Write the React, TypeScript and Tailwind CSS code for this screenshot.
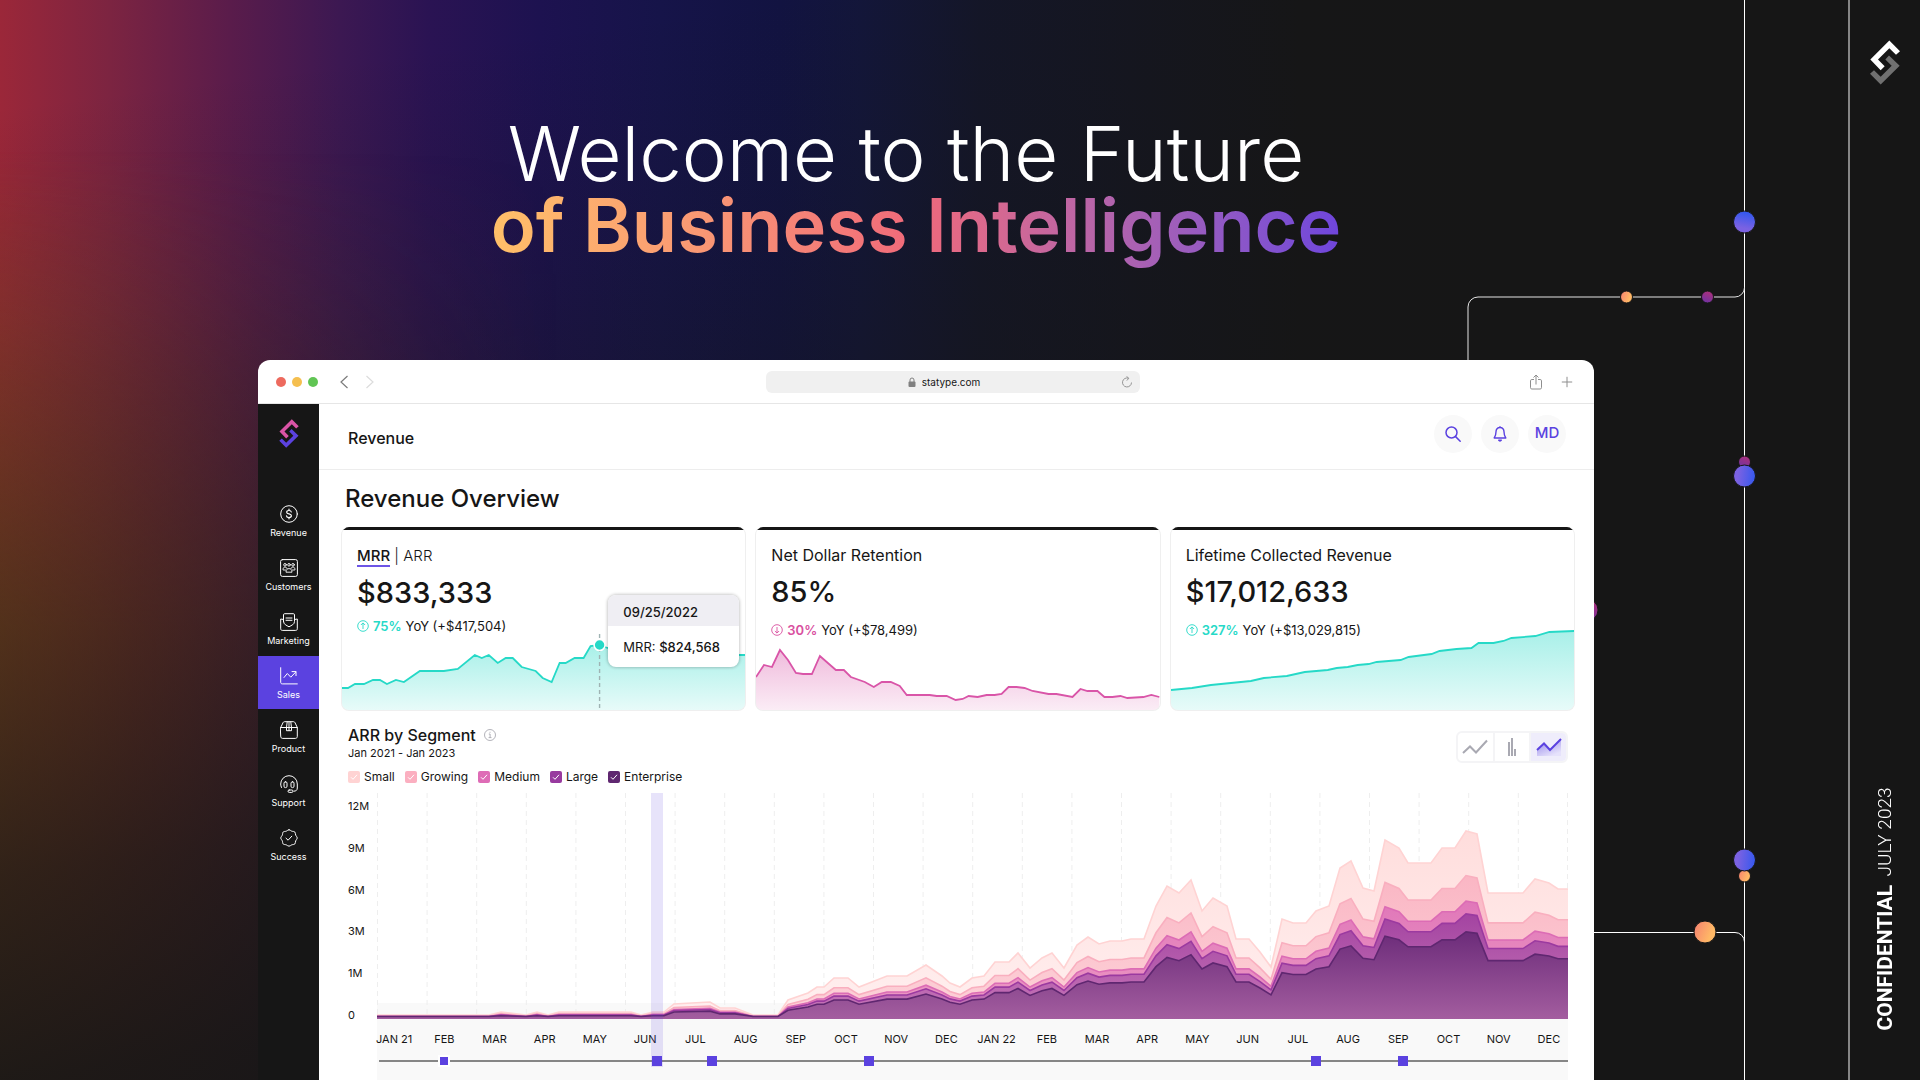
import { useId, useState } from "react";
import type { ReactNode } from "react";

type Point = [number, number];

const REVENUE_LINE: Point[] = [
  [0, 68], [6, 68], [13, 64], [22, 64], [31, 60], [38, 60], [45, 64], [54, 60], [62, 62], [78, 51], [102, 51],
  [116, 49], [133, 35], [140, 38], [147, 35], [156, 43], [164, 38], [171, 38], [180, 47], [194, 51], [201, 58],
  [210, 62], [218, 43], [224, 43], [233, 38], [242, 38], [249, 26], [258, 25], [266, 28], [300, 34], [397, 35], [404, 35],
];

const RETENTION_LINE: Point[] = [
  [0, 57], [8, 45], [16, 47], [24, 30], [32, 40], [40, 53], [47, 54], [56, 54], [64, 36], [80, 50], [88, 50],
  [95, 57], [109, 62], [118, 67], [126, 62], [135, 62], [144, 66], [151, 75], [174, 75], [181, 76], [191, 76],
  [200, 80], [207, 79], [213, 76], [222, 77], [231, 75], [239, 75], [246, 74], [253, 67], [261, 67], [269, 68],
  [277, 71], [293, 74], [301, 74], [317, 77], [325, 69], [332, 71], [342, 71], [349, 77], [357, 77], [365, 76],
  [372, 78], [388, 77], [396, 75], [404, 77],
];

const LIFETIME_LINE: Point[] = [
  [0, 70], [21, 68], [40, 65], [80, 61], [93, 58], [116, 56], [134, 52], [157, 50], [166, 48], [177, 47],
  [187, 45], [198, 44], [206, 42], [230, 40], [238, 37], [261, 34], [269, 31], [286, 29], [301, 28], [308, 23],
  [323, 23], [333, 21], [341, 18], [365, 16], [379, 12], [404, 11],
];

const TOTALS: Point[] = [
  [0, 4], [112, 4], [124, 7], [149, 4], [160, 7], [171, 4], [182, 7], [254, 7], [264, 4], [276, 7], [287, 7],
  [297, 15], [333, 17], [343, 11], [358, 11], [376, 4], [401, 4], [411, 19], [431, 26], [440, 32], [447, 32],
  [457, 41], [471, 41], [482, 32], [510, 43], [530, 43], [549, 54], [565, 43], [573, 36], [583, 32], [595, 41],
  [607, 43], [618, 57], [632, 57], [641, 66], [653, 51], [665, 61], [675, 66], [687, 51], [700, 74], [711, 82],
  [722, 75], [733, 78], [745, 78], [754, 80], [767, 80], [779, 113], [790, 133], [802, 126], [814, 139],
  [825, 108], [836, 121], [850, 113], [859, 80], [872, 80], [883, 67], [894, 52], [905, 100], [916, 96],
  [929, 96], [939, 108], [952, 113], [963, 151], [974, 158], [986, 131], [997, 128], [1008, 179], [1022, 171],
  [1031, 156], [1054, 156], [1065, 171], [1078, 171], [1089, 188], [1100, 185], [1111, 126], [1146, 126],
  [1158, 140], [1172, 136], [1181, 130], [1191, 130],
];

const SEGMENTS = [
  { name: "Small", share: 1, line: "#ffd3d3", top: "#ffdddc", bottom: "#fff0f0", box: "bg-[#ffd3d3]" },
  { name: "Growing", share: 0.763, line: "#f9afbf", top: "#fab6c4", bottom: "#fdd3d9", box: "bg-[#fbafc0]" },
  { name: "Medium", share: 0.627, line: "#dc6cb5", top: "#e077b9", bottom: "#ee9cc4", box: "bg-[#de6cb6]" },
  { name: "Large", share: 0.559, line: "#9b3aa0", top: "#a343a1", bottom: "#c878b8", box: "bg-[#983a9f]" },
  { name: "Enterprise", share: 0.463, line: "#5f2770", top: "#6c2c7a", bottom: "#a35d9f", box: "bg-[#5f2770]" },
];

const MONTHS = [
  "JAN 21", "FEB", "MAR", "APR", "MAY", "JUN", "JUL", "AUG", "SEP", "OCT", "NOV", "DEC",
  "JAN 22", "FEB", "MAR", "APR", "MAY", "JUN", "JUL", "AUG", "SEP", "OCT", "NOV", "DEC",
];

const MARKERS = [5.5, 23.4, 28, 41.2, 78.8, 86.1];

const toPath = (points: Point[]) => points.map(([x, y], i) => `${i ? "L" : "M"}${x} ${y}`).join("");

function Logo({ className, top, bottom }: { className: string; top: string; bottom: string }) {
  return (
    <svg viewBox="0 0 90 134" className={className} role="img" aria-label="Statype">
      <path d="M58 1 90 33 78 44 58 24 24 58 44 78 32 90 1 58Z" fill={top} />
      <path d="M32 133 0 101 12 90 32 110 65 77 46 58 57 46 89 77Z" fill={bottom} />
    </svg>
  );
}

function Circuit() {
  return (
    <svg
      viewBox="0 0 1920 1080"
      preserveAspectRatio="xMaxYMin slice"
      className="pointer-events-none absolute inset-0 h-full w-full"
      fill="none"
      aria-hidden="true"
    >
      <defs>
        <linearGradient id="blueV" x1="0" y1="1" x2="0.2" y2="0">
          <stop offset="0.3" stopColor="#7b62e2" />
          <stop offset="1" stopColor="#3558ee" />
        </linearGradient>
        <linearGradient id="blueH" x1="0" y1="0.4" x2="1" y2="0.5">
          <stop offset="0.2" stopColor="#7b62e2" />
          <stop offset="1" stopColor="#3558ee" />
        </linearGradient>
        <linearGradient id="orangeDot" x1="0" y1="0.2" x2="1" y2="0.6">
          <stop offset="0" stopColor="#f6836f" />
          <stop offset="0.8" stopColor="#ffb866" />
        </linearGradient>
        <linearGradient id="plumDot" x1="0.2" y1="1" x2="0.6" y2="0">
          <stop offset="0" stopColor="#6d33a5" />
          <stop offset="0.9" stopColor="#a4307f" />
        </linearGradient>
      </defs>
      <path d="M1744.5 0V1080" stroke="#fff" />
      <path d="M1468 360V307a10 10 0 0 1 10-10H1735a9.500 9.500 0 0 0 9.500-9.500" stroke="#e4e4e4" />
      <path d="M1590 932.500H1735a9.500 9.500 0 0 1 9.500 9.500" stroke="#fff" />
      <g stroke="#161616">
        <circle cx="1744.500" cy="222" r="11" fill="url(#blueV)" />
        <circle cx="1626.500" cy="297" r="6" fill="url(#orangeDot)" />
        <circle cx="1707.500" cy="297" r="6" fill="url(#plumDot)" />
        <circle cx="1744.500" cy="462" r="6" fill="url(#plumDot)" />
        <circle cx="1744.500" cy="476" r="11" fill="url(#blueH)" />
        <circle cx="1587" cy="610" r="11" fill="url(#plumDot)" />
        <circle cx="1744.500" cy="876" r="6" fill="url(#orangeDot)" />
        <circle cx="1744.500" cy="860" r="11" fill="url(#blueH)" />
        <circle cx="1705" cy="932" r="11" fill="url(#orangeDot)" />
      </g>
    </svg>
  );
}

function NavIcon({ children }: { children: ReactNode }) {
  return (
    <svg
      viewBox="0 0 18 18"
      className="h-[18px] w-[18px]"
      fill="none"
      stroke="currentColor"
      strokeLinecap="round"
      strokeLinejoin="round"
      aria-hidden="true"
    >
      {children}
    </svg>
  );
}

const NAV: { label: string; icon: ReactNode }[] = [
  {
    label: "Revenue",
    icon: (
      <>
        <circle cx="9" cy="9" r="8.300" />
        <path d="M11.300 7c-.2-1-1.100-1.500-2.300-1.500-1.300 0-2.300.6-2.300 1.700 0 2.500 4.700 1 4.700 3.600 0 1.100-1.100 1.700-2.400 1.700s-2.300-.6-2.500-1.700M9 4.200v1.300M9 12.500v1.300" strokeWidth="1.200" />
      </>
    ),
  },
  {
    label: "Customers",
    icon: (
      <>
        <rect x="0.600" y="0.600" width="16.800" height="16.800" rx="1.800" />
        <g strokeWidth="0.900">
          <circle cx="5" cy="5.800" r="1.300" />
          <circle cx="9" cy="5.800" r="1.300" />
          <circle cx="13" cy="5.800" r="1.300" />
          <path d="M3 10.500c0-1.600.8-2.400 2-2.400s1.800.6 2 1.400M15 10.500c0-1.600-.8-2.400-2-2.400s-1.800.6-2 1.400M6 12.800c0-2 1.200-3.200 3-3.200s3 1.200 3 3.200zM3.500 11h2M12.500 11h2" />
        </g>
      </>
    ),
  },
  {
    label: "Marketing",
    icon: (
      <path d="M3.500 8.500V1.800c0-.7.400-1.100 1.100-1.100h8.800c.7 0 1.100.4 1.100 1.100v6.700c0 3-3 3.800-5.500 5.300-2.500-1.500-5.500-2.300-5.500-5.300ZM3.400 6.500.7 6v9.800c0 1 .6 1.600 1.600 1.600h13.400c1 0 1.600-.6 1.600-1.600V6l-2.700.5M6 5h6M6 7.300h6" />
    ),
  },
  {
    label: "Sales",
    icon: <path d="M.7.700v14.600c0 1 .6 1.600 1.600 1.600h15M4 10.500l3.300-4 3.500 3.700 5-5.200M12 4.600h4v4" />,
  },
  {
    label: "Product",
    icon: (
      <path d="M.7 6.500h16.600v9c0 1.100-.8 1.900-1.900 1.900H2.600c-1.100 0-1.900-.8-1.900-1.900zL3 1.700C3.300 1 3.800.7 4.500.7h9c.7 0 1.200.3 1.500 1l2.300 4.800M7.200.9l-.7 5.600v3.200h5V6.500L10.800.9M9 .9v8.600" />
    ),
  },
  {
    label: "Support",
    icon: (
      <>
        <path d="M1.500 12.500C1 11.400.7 10.200.7 9a8.300 8.300 0 0 1 16.600 0v4c0 2.200-1.300 3.200-3.300 3.200" />
        <rect x="4" y="6.800" width="3" height="5.800" rx="1.400" />
        <rect x="11" y="6.800" width="3" height="5.800" rx="1.400" />
        <rect x="8" y="15" width="5" height="2.400" rx="1.200" />
      </>
    ),
  },
  {
    label: "Success",
    icon: (
      <>
        <path d="M9 .8c1.200 0 1.700 1 2.800 1.400 1.100.4 2.200 0 3 .8.800.9.400 2 .9 3.100.4 1.100 1.500 1.700 1.500 2.900s-1.100 1.800-1.500 2.900c-.5 1.100-.1 2.200-.9 3.100-.8.800-1.900.4-3 .8C10.700 16.200 10.200 17.200 9 17.200s-1.700-1-2.800-1.400c-1.100-.4-2.200 0-3-.8-.8-.9-.4-2-.9-3.100C1.900 10.800.8 10.200.8 9s1.100-1.800 1.500-2.900c.5-1.100.1-2.200.9-3.100.8-.8 1.900-.4 3-.8C7.300 1.800 7.800.8 9 .8Z" />
        <path d="m6 9.200 2.100 2 3.700-4" />
      </>
    ),
  },
];

function Trend({ down, className }: { down?: boolean; className: string }) {
  return (
    <svg viewBox="0 0 12 12" className={className} fill="none" stroke="currentColor" aria-hidden="true">
      <circle cx="6" cy="6" r="5.300" strokeWidth="0.900" />
      <path d={down ? "M6 3v6M3.900 7 6 9.100 8.100 7" : "M6 9V3M3.900 5 6 2.900 8.100 5"} strokeWidth="0.900" />
    </svg>
  );
}

function Sparkline({ points, color, children }: { points: Point[]; color: string; children?: ReactNode }) {
  const id = useId();
  const line = toPath(points);
  return (
    <svg
      viewBox="0 0 404 90"
      preserveAspectRatio="none"
      className="absolute inset-x-0 bottom-0 h-[90px] w-full"
      fill="none"
      aria-hidden="true"
    >
      <defs>
        <linearGradient id={id} x1="0" y1="0" x2="0" y2="1">
          <stop offset="0" stopColor={color} stopOpacity="0.400" />
          <stop offset="1" stopColor={color} stopOpacity="0.110" />
        </linearGradient>
      </defs>
      <path d={`${line}L404 90L0 90Z`} fill={`url(#${id})`} />
      <path d={line} stroke={color} strokeWidth="1.800" />
      {children}
    </svg>
  );
}

function Card({
  title,
  value,
  change,
  note,
  down,
  raised,
  chart,
  children,
}: {
  title: ReactNode;
  value: string;
  change: string;
  note: string;
  down?: boolean;
  raised?: boolean;
  chart: ReactNode;
  children?: ReactNode;
}) {
  return (
    <article className="relative h-[184px]">
      <div className="absolute inset-0 overflow-hidden rounded-lg border border-t-0 border-[#efefef] bg-white">
        <div className="h-[3px] bg-[#161616]" />
        {chart}
      </div>
      <div className="relative flex flex-col px-4 pt-4">
        <h3 className="text-base">{title}</h3>
        <p className="pt-2 text-[29px] leading-[34px] font-medium">{value}</p>
        <p className={raised ? "flex items-center pt-1.5 text-[13px] leading-5" : "flex items-center pt-[11px] text-[13px] leading-5"}>
          <Trend down={down} className={down ? "mr-1 h-3 w-3 text-[#d9509f]" : "mr-1 h-3 w-3 text-[#26d9c7]"} />
          <span className={down ? "mr-1 font-semibold text-[#d9509f]" : "mr-1 font-semibold text-[#26d9c7]"}>
            {change}
          </span>
          <span>{note}</span>
        </p>
      </div>
      {children}
    </article>
  );
}

function SegmentChart({ visible }: { visible: string[] }) {
  return (
    <svg
      viewBox="0 0 1191 226"
      preserveAspectRatio="none"
      className="relative h-[226px] w-full shrink-0"
      fill="none"
      role="img"
      aria-label="ARR by segment"
    >
      <defs>
        {SEGMENTS.map((s) => (
          <linearGradient
            key={s.name}
            id={`fill${s.name}`}
            gradientUnits="userSpaceOnUse"
            x1="0"
            y1={226 - 188 * s.share}
            x2="0"
            y2="226"
          >
            <stop offset="0" stopColor={s.top} />
            <stop offset="1" stopColor={s.bottom} />
          </linearGradient>
        ))}
      </defs>
      {Array.from({ length: 25 }, (_, i) => (
        <path key={i} d={`M${Math.min(i * 49.6 + 0.5, 1190.5)} 0V226`} stroke="#eeeeee" strokeDasharray="5 4" />
      ))}
      {SEGMENTS.filter((s) => visible.includes(s.name)).map((s) => {
        const line = toPath(TOTALS.map(([x, v]) => [x, 226 - Math.max(v * s.share, 2.5)] as Point));
        return (
          <g key={s.name}>
            <path d={`${line}L1191 226L0 226Z`} fill={`url(#fill${s.name})`} />
            <path d={line} stroke={s.line} strokeWidth="1.600" />
          </g>
        );
      })}
    </svg>
  );
}

export default function App() {
  const [visible, setVisible] = useState(SEGMENTS.map((s) => s.name));
  const toggle = (name: string) =>
    setVisible((v) => (v.includes(name) ? v.filter((n) => n !== name) : [...v, name]));

  return (
    <div className="relative flex h-screen overflow-hidden bg-[#161616] font-['Inter',sans-serif] text-[#161616]">
      <div className="absolute inset-0 bg-[linear-gradient(90deg,#9b2739_0px,#7c2441_110px,#5a1c4b_230px,#3c1852_340px,#2a1353_430px,#1d1250_540px,#161449_660px,#121341_780px,#13163a_860px,#141628_980px,#151620_1130px,#161617_1300px,#161616_1500px)]" />
      <div className="absolute inset-0 bg-[linear-gradient(90deg,#8e4c20_0px,rgba(130,64,32,0.7)_140px,rgba(110,56,34,0.45)_260px,transparent_560px)] [mask-image:linear-gradient(180deg,transparent_14%,rgba(0,0,0,0.35)_30%,black_58%)]" />
      <div className="absolute inset-0 bg-[linear-gradient(172deg,rgba(22,22,22,0)_8%,rgba(22,22,22,0.17)_24%,rgba(22,22,22,0.44)_42%,rgba(22,22,22,0.6)_53%,rgba(22,22,22,0.78)_65%,rgba(22,22,22,0.93)_80%,rgb(22,22,22)_94%)]" />
      <Circuit />

      <main className="relative flex min-w-0 flex-1 flex-col pr-[254px] pl-[258px]">
        <h1 className="h-[360px] shrink-0 pt-[117px] pr-5 text-center leading-[72px] whitespace-nowrap">
          <span className="block pr-5 text-[76px] font-light text-white">Welcome to the Future</span>
          <span className="mx-auto block w-fit bg-linear-to-r from-[#ffc068] via-[#f0697a] via-50% to-[#6f45dc] bg-clip-text pb-3 text-[74px] font-semibold text-transparent">
            of Business Intelligence
          </span>
        </h1>

        <section className="flex min-h-0 flex-1 flex-col overflow-hidden rounded-t-xl bg-white">
          <header className="grid h-11 shrink-0 grid-cols-[38fr_28fr_34fr] items-center border-b border-[#e6e6e6]">
            <div className="flex items-center pl-[18px]">
              <div className="flex gap-1.5">
                <span className="h-2.5 w-2.5 rounded-full bg-[#ed6a5e]" />
                <span className="h-2.5 w-2.5 rounded-full bg-[#f5bf4f]" />
                <span className="h-2.5 w-2.5 rounded-full bg-[#61c554]" />
              </div>
              <button type="button" aria-label="Back" className="ml-5 text-[#7c7c7c]">
                <svg viewBox="0 0 12 14" className="h-3.5 w-3" fill="none" stroke="currentColor" strokeWidth="1.200">
                  <path d="M9.500 1 3 7l6.500 6" />
                </svg>
              </button>
              <button type="button" aria-label="Forward" className="ml-3.5 text-[#dcdcdc]">
                <svg viewBox="0 0 12 14" className="h-3.5 w-3" fill="none" stroke="currentColor" strokeWidth="1.200">
                  <path d="M2.500 1 9 7l-6.500 6" />
                </svg>
              </button>
            </div>
            <div className="flex h-[22px] items-center rounded-md bg-[#f0f0f0] px-[7px]">
              <div className="flex flex-1 items-center justify-center gap-1.5">
                <svg viewBox="0 0 8 10" className="h-2.5 w-2" aria-hidden="true">
                  <rect x="0.500" y="4.500" width="7" height="5.500" rx="1" fill="#808080" />
                  <path d="M2 5V3a2 2 0 0 1 4 0v2" fill="none" stroke="#808080" />
                </svg>
                <input
                  aria-label="Address"
                  defaultValue="statype.com"
                  className="w-[64px] bg-transparent text-[10px] leading-4 outline-none"
                />
              </div>
              <button type="button" aria-label="Reload" className="text-[#8a8a8a]">
                <svg viewBox="0 0 12 12" className="h-3 w-3" fill="none" stroke="currentColor">
                  <path d="M7.500 2.200A4.500 4.500 0 1 0 10.500 6.500M5.500.3l2.300 2-2 2.300" strokeWidth="0.900" />
                </svg>
              </button>
            </div>
            <div className="flex items-center justify-end gap-[18px] pr-[21px] text-[#8e8e8e]">
              <button type="button" aria-label="Share">
                <svg viewBox="0 0 14 16" className="h-4 w-3.5" fill="none" stroke="currentColor">
                  <path d="M5 5.500H2.800c-.8 0-1.300.5-1.300 1.300v6.900c0 .8.500 1.300 1.300 1.300h8.400c.8 0 1.300-.5 1.300-1.300V6.800c0-.8-.5-1.300-1.300-1.300H9M7 10.500V1M4.500 3.500 7 1l2.500 2.500" />
                </svg>
              </button>
              <button type="button" aria-label="New tab">
                <svg viewBox="0 0 12 12" className="h-3 w-3" fill="none" stroke="currentColor">
                  <path d="M6 .8v10.400M.8 6h10.400" />
                </svg>
              </button>
            </div>
          </header>

          <div className="flex min-h-0 flex-1">
            <nav className="flex w-[61px] shrink-0 flex-col items-center bg-[#161616] text-white">
              <Logo className="mt-[15px] mb-[46px] h-[29px] w-5" top="#da54a6" bottom="#5b42e0" />
              <ul className="flex w-full flex-col gap-px">
                {NAV.map(({ label, icon }) => (
                  <li key={label}>
                    <a
                      href={`#${label.toLowerCase()}`}
                      className={
                        label === "Sales"
                          ? "flex h-[53px] flex-col items-center gap-1 bg-[#5b42e0] pt-[11px] text-[9px] leading-3"
                          : "flex h-[53px] flex-col items-center gap-1 pt-[11px] text-[9px] leading-3"
                      }
                    >
                      <NavIcon>{icon}</NavIcon>
                      {label}
                    </a>
                  </li>
                ))}
              </ul>
            </nav>

            <div className="flex min-w-0 flex-1 flex-col">
              <div className="flex h-[66px] shrink-0 items-center justify-between border-b border-[#ededed] pr-7 pl-[29px]">
                <p className="pt-0.5 text-base font-medium">Revenue</p>
                <div className="flex gap-[9px] pb-1.5 text-[#5b42e0]">
                  <button type="button" aria-label="Search" className="flex h-[38px] w-[38px] items-center justify-center rounded-full bg-[#f9f9f9]">
                    <svg viewBox="0 0 18 18" className="h-[18px] w-[18px]" fill="none" stroke="currentColor" strokeWidth="1.500" strokeLinecap="round">
                      <circle cx="7.500" cy="7.500" r="5.500" />
                      <path d="m11.600 11.600 4.600 4.600" />
                    </svg>
                  </button>
                  <button type="button" aria-label="Notifications" className="flex h-[38px] w-[38px] items-center justify-center rounded-full bg-[#f9f9f9]">
                    <svg viewBox="0 0 16 18" className="h-[18px] w-4" fill="none" stroke="currentColor" strokeWidth="1.400" strokeLinejoin="round" strokeLinecap="round">
                      <path d="M8 2.500c-2.600 0-4 1.900-4 4.300 0 3.400-.8 4.700-1.800 6.200h11.600C12.800 11.500 12 10.200 12 6.800c0-2.400-1.400-4.300-4-4.300ZM8 2.500V1.600" />
                      <path d="M6.700 15.200a1.500 1.500 0 0 0 2.600 0Z" fill="currentColor" />
                    </svg>
                  </button>
                  <button type="button" aria-label="Account MD" className="flex h-[38px] w-[38px] items-center justify-center rounded-full bg-[#f9f9f9] text-[15px] font-medium">
                    MD
                  </button>
                </div>
              </div>

              <div className="flex min-h-0 flex-1 flex-col pr-[19px] pl-[22px]">
                <h2 className="pt-[13px] pb-3 pl-1 text-2xl leading-8 font-medium">Revenue Overview</h2>

                <div className="grid shrink-0 grid-cols-3 gap-[9px]">
                  <Card
                    raised
                    title={
                      <span className="text-[15px]">
                        <span className="border-b-2 border-[#6d55e6] font-medium">MRR</span>
                        <span className="font-light"> | ARR</span>
                      </span>
                    }
                    value="$833,333"
                    change="75%"
                    note="YoY (+$417,504)"
                    chart={
                      <Sparkline points={REVENUE_LINE} color="#26d9c7">
                        <path d="M258 14v76" stroke="#9fb3b3" strokeDasharray="4 3" strokeWidth="1.400" />
                        <circle cx="258" cy="25" r="5.500" fill="#26d9c7" stroke="#fff" strokeWidth="1.600" />
                      </Sparkline>
                    }
                  >
                    <div className="absolute top-[68px] right-[7px] w-[131px] overflow-hidden rounded-lg bg-white text-[13px] leading-5 font-medium shadow-[0_0_3px_1px_rgba(0,0,0,0.2)]">
                      <p className="bg-[#efeef3] px-[15px] pt-[7px] pb-1">09/25/2022</p>
                      <p className="px-[15px] pt-[11px] pb-[10px] font-normal whitespace-nowrap">
                        MRR: <span className="font-medium">$824,568</span>
                      </p>
                    </div>
                  </Card>
                  <Card
                    title="Net Dollar Retention"
                    value="85%"
                    change="30%"
                    note="YoY (+$78,499)"
                    down
                    chart={<Sparkline points={RETENTION_LINE} color="#d955a8" />}
                  />
                  <Card
                    title="Lifetime Collected Revenue"
                    value="$17,012,633"
                    change="327%"
                    note="YoY (+$13,029,815)"
                    chart={<Sparkline points={LIFETIME_LINE} color="#26d9c7" />}
                  />
                </div>

                <div className="flex min-h-0 flex-1 flex-col pr-[7px] pl-[7px]">
                  <div className="flex justify-between pt-3">
                    <div>
                      <h3 className="flex items-center gap-2 text-base font-medium">
                        ARR by Segment
                        <svg viewBox="0 0 12 12" className="h-3 w-3 text-[#9f9fa8]" fill="none" stroke="currentColor" strokeWidth="0.800" aria-hidden="true">
                          <circle cx="6" cy="6" r="5.500" />
                          <path d="M4.800 5h1.300v3.500M4.600 8.600h2.900M6 2.800v1" />
                        </svg>
                      </h3>
                      <p className="text-[11px] leading-3">Jan 2021 - Jan 2023</p>
                      <div className="flex gap-2.5 pt-2.5 text-xs">
                        {SEGMENTS.map((s) => (
                          <label key={s.name} className="flex items-center gap-1">
                            <span className="relative flex">
                              <input
                                type="checkbox"
                                checked={visible.includes(s.name)}
                                onChange={() => toggle(s.name)}
                                className={`peer h-3 w-3 appearance-none rounded-xs ${s.box}`}
                              />
                              <svg viewBox="0 0 12 12" className="pointer-events-none absolute inset-0 hidden h-3 w-3 peer-checked:block" fill="none" stroke="#fff">
                                <path d="m3 6.300 2 2 4-4.500" />
                              </svg>
                            </span>
                            {s.name}
                          </label>
                        ))}
                      </div>
                    </div>
                    <div className="mt-2 flex h-8 w-[112px] divide-x-2 divide-[#f4f4f6] overflow-hidden rounded-md border-2 border-[#f4f4f6]">
                      <button type="button" aria-label="Line chart" className="flex flex-1 items-center justify-center">
                        <svg viewBox="0 0 26 16" className="h-4 w-[26px]" fill="none" stroke="#a9a9b2" strokeWidth="2">
                          <path d="m1 14 7-6.500 6 6L25 1.500" />
                        </svg>
                      </button>
                      <button type="button" aria-label="Bar chart" className="flex flex-1 items-center justify-center">
                        <svg viewBox="0 0 10 18" className="h-[18px] w-2.5" fill="none" stroke="#a9a9b2" strokeWidth="2">
                          <path d="M2 4v14M5 0v18M8 11v7" />
                        </svg>
                      </button>
                      <button type="button" aria-label="Area chart" className="flex flex-1 items-center justify-center bg-[#efedfb]">
                        <svg viewBox="0 0 26 18" className="h-[18px] w-[26px]" fill="none">
                          <defs>
                            <linearGradient id="areaIcon" x1="0" y1="0" x2="0.600" y2="1">
                              <stop offset="0.300" stopColor="#aba0ef" />
                              <stop offset="1" stopColor="#e6e2fb" />
                            </linearGradient>
                          </defs>
                          <path d="m1 12 7-6.500 6 6.500L25 1v17H1Z" fill="url(#areaIcon)" />
                          <path d="m1 12 7-6.500 6 6.500L25 1" stroke="#5b42e0" strokeWidth="2" />
                        </svg>
                      </button>
                    </div>
                  </div>

                  <div className="flex min-h-0 flex-1 pt-2">
                    <div className="flex h-[230px] w-[29px] shrink-0 flex-col justify-between pt-[5px] text-[11px] leading-4">
                      {["12M", "9M", "6M", "3M", "1M", "0"].map((t) => (
                        <span key={t}>{t}</span>
                      ))}
                    </div>
                    <div className="relative flex min-w-0 flex-1 flex-col bg-[linear-gradient(180deg,transparent_210px,#f9f9f9_210px)]">
                      <SegmentChart visible={visible} />
                      <div className="relative -mr-1.5 -ml-2 grid shrink-0 grid-cols-[repeat(24,minmax(0,1fr))] pt-3 text-center text-[11px] leading-4 whitespace-nowrap">
                        {MONTHS.map((m, i) => (
                          <span key={i}>{m}</span>
                        ))}
                      </div>
                      <div className="relative mt-[13px] ml-0.5 h-0.5 shrink-0 bg-[#868686]">
                        {MARKERS.map((m, i) => (
                          <button
                            key={m}
                            type="button"
                            aria-label={`Event ${i + 1}`}
                            className={
                              i === 0
                                ? "absolute -top-[3px] h-2 w-2 -translate-x-1/2 bg-[#5b42e0] ring-2 ring-white"
                                : "absolute -top-1 h-2.5 w-2.5 -translate-x-1/2 bg-[#5b42e0]"
                            }
                            style={{ left: `${m}%` }}
                          />
                        ))}
                      </div>
                      <div className="pointer-events-none absolute top-0 left-[23%] h-[274px] w-3 bg-[#5b42e0]/15" />
                    </div>
                  </div>
                </div>
              </div>
            </div>
          </div>
        </section>
      </main>

      <aside className="relative flex w-[72px] shrink-0 flex-col items-center justify-between border-l-2 border-[#868686] pt-10 pb-[50px] text-white">
        <Logo className="h-[45px] w-[30px]" top="#ffffff" bottom="#707070" />
        <p className="flex rotate-180 items-center gap-2 font-['Roboto',sans-serif] leading-6 font-light whitespace-nowrap [writing-mode:vertical-rl]">
          <strong className="text-[21px] font-bold">CONFIDENTIAL</strong>
          <span className="text-[19px]">JULY 2023</span>
        </p>
      </aside>
    </div>
  );
}
